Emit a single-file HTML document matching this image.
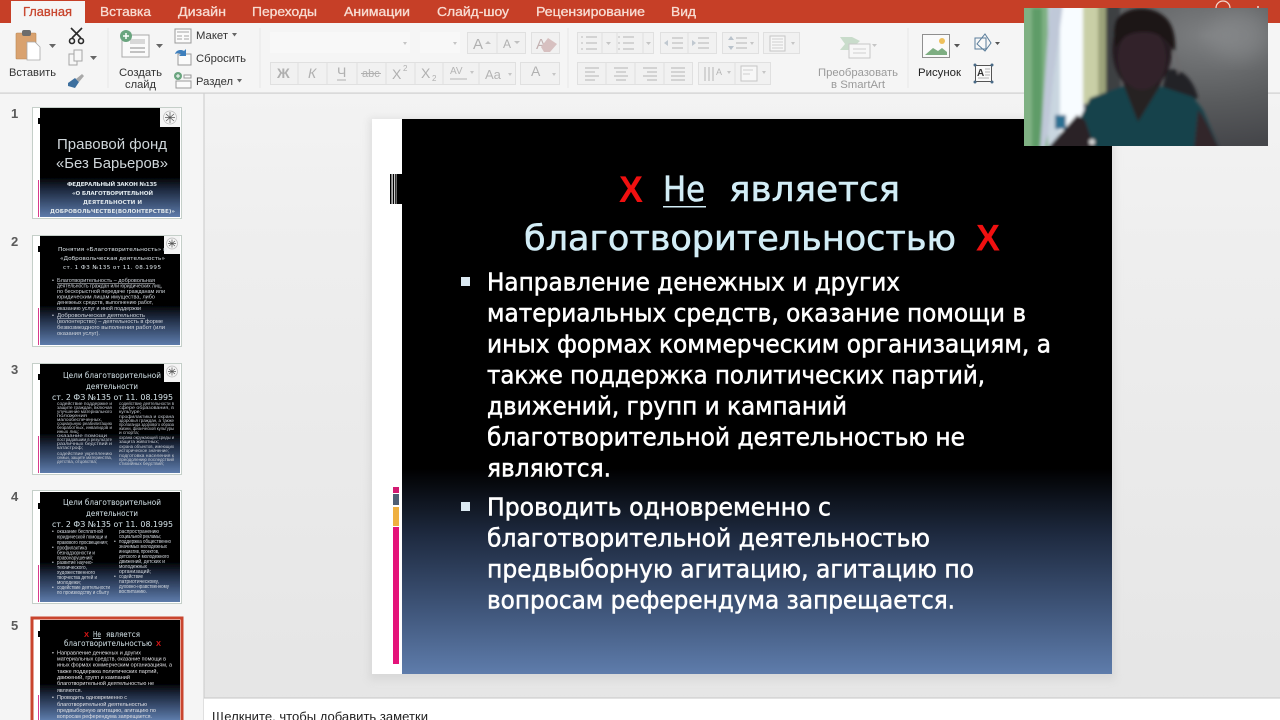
<!DOCTYPE html>
<html lang="ru">
<head>
<meta charset="utf-8">
<title>PowerPoint</title>
<style>
html,body{margin:0;padding:0;width:1280px;height:720px;overflow:hidden;background:#e6e6e6}
svg{display:block;position:absolute;left:0;top:0}
text{font-family:"Liberation Sans","DejaVu Sans",sans-serif}
.tab{font-size:13px;fill:#f8dcd2;stroke:#f8dcd2;stroke-width:.3px}
.rb{font-size:11px;fill:#333}
.dis{font-size:11px;fill:#9a9a9a}
.num{font-size:13px;font-weight:bold;fill:#5a5a5a}
.body{font-family:"DejaVu Sans",sans-serif;font-size:25px;fill:#fff;stroke:#fff;stroke-width:.55px}
.title{font-family:"DejaVu Sans",sans-serif;font-size:35px;fill:#d2edf6;stroke:#d2edf6;stroke-width:.6px}
.t1{font-size:15px;fill:#cfd6da}
.t2{font-size:5.600px;fill:#dde5ea}
.t2b{font-family:"DejaVu Sans",sans-serif;font-size:5.600px;fill:#dde5ea}
.t3{font-size:5.500px;fill:#d0d5dc}
.t4{font-family:"DejaVu Sans",sans-serif;font-size:8px;fill:#d5e4ea}
.t5{font-size:4.300px;fill:#c4c9d1}
.ico{fill:none;stroke:#8a8a8a;stroke-width:1}
.g{fill:none;stroke:#b5b5b5;stroke-width:1}
.btn{fill:#f1f1f1;stroke:#e0e0e0;stroke-width:1}
.gl{font-size:14px;fill:#b0b0b0}
.sep{stroke:#e8e8e8;stroke-width:1}
</style>
</head>
<body>
<svg width="1280" height="720" viewBox="0 0 1280 720" xmlns="http://www.w3.org/2000/svg">
<defs>
<linearGradient id="sl" x1="0" y1="0" x2="0" y2="1">
<stop offset="0" stop-color="#000"/><stop offset=".63" stop-color="#000"/>
<stop offset=".75" stop-color="#1e2a40"/><stop offset=".88" stop-color="#3e5478"/><stop offset="1" stop-color="#5e7cab"/>
</linearGradient>
<linearGradient id="cv" x1="0" y1="0" x2="0" y2="1">
<stop offset="0" stop-color="#f6f6f6"/><stop offset=".35" stop-color="#eeeeee"/><stop offset="1" stop-color="#e5e5e5"/>
</linearGradient>
<filter id="b0" filterUnits="userSpaceOnUse" x="0" y="93" width="204" height="627"><feGaussianBlur stdDeviation=".35"/></filter>
<filter id="b1" x="-20%" y="-20%" width="140%" height="140%"><feGaussianBlur stdDeviation="1.6"/></filter>
<filter id="b2" x="-20%" y="-20%" width="140%" height="140%"><feGaussianBlur stdDeviation="4"/></filter>
<filter id="b3" x="-20%" y="-20%" width="140%" height="140%"><feGaussianBlur stdDeviation="10"/></filter>
<clipPath id="cam"><rect x="1024" y="8" width="244" height="138"/></clipPath>
<radialGradient id="wall" cx=".75" cy=".2" r=".8">
<stop offset="0" stop-color="#7d7f81"/><stop offset=".6" stop-color="#595b5d"/><stop offset="1" stop-color="#45464a"/>
</radialGradient>
</defs>

<!-- base panels -->
<rect width="1280" height="720" fill="url(#cv)"/>
<rect x="0" y="93" width="204" height="627" fill="#f5f5f5"/>
<rect x="203.500" y="93" width="1" height="627" fill="#c9c9c9"/>

<!-- tab bar -->
<rect x="0" y="0" width="1280" height="23" fill="#c63f27"/>
<rect x="11" y="1" width="74" height="23" fill="#f5f5f5"/>
<text x="23" y="16" class="tab" style="fill:#c8452d;stroke:#c8452d" textLength="49" lengthAdjust="spacingAndGlyphs">Главная</text>
<text x="100" y="16" class="tab" textLength="51" lengthAdjust="spacingAndGlyphs">Вставка</text>
<text x="178" y="16" class="tab" textLength="48" lengthAdjust="spacingAndGlyphs">Дизайн</text>
<text x="252" y="16" class="tab" textLength="65" lengthAdjust="spacingAndGlyphs">Переходы</text>
<text x="344" y="16" class="tab" textLength="66" lengthAdjust="spacingAndGlyphs">Анимации</text>
<text x="437" y="16" class="tab" textLength="72" lengthAdjust="spacingAndGlyphs">Слайд-шоу</text>
<text x="536" y="16" class="tab" textLength="109" lengthAdjust="spacingAndGlyphs">Рецензирование</text>
<text x="671" y="16" class="tab" textLength="25" lengthAdjust="spacingAndGlyphs">Вид</text>
<circle cx="1223" cy="8" r="7" fill="none" stroke="#f4d9d0" stroke-width="1.200"/>
<path d="M1258 8v-2" stroke="#f4d9d0" stroke-width="1.500"/>

<!-- ribbon -->
<rect x="0" y="23" width="1280" height="70" fill="#f5f5f5"/>
<rect x="0" y="92.500" width="1280" height="1.200" fill="#cfcfcf"/>

<!-- paste -->
<rect x="16" y="33" width="20" height="26" rx="1" fill="#d9a26f" stroke="#b98654" stroke-width=".6"/>
<rect x="22" y="30" width="9" height="6" rx="2" fill="#6c6c6c"/>
<path d="M27 42h8l5 5v13H27z" fill="#fff" stroke="#a8a8a8" stroke-width=".8"/>
<path d="M49 44h7l-3.500 4z" fill="#666"/>
<!-- scissors -->
<g fill="none" stroke="#2a2a2a" stroke-width="1.600">
<path d="M71 28l10 10M82 28l-10 10"/>
<circle cx="72" cy="41" r="2.500"/><circle cx="81" cy="41" r="2.500"/>
</g>
<!-- copy -->
<rect x="69" y="54" width="8" height="11" fill="#f7f7f7" stroke="#a5a5a5"/>
<rect x="74" y="50" width="8" height="11" fill="#f7f7f7" stroke="#a5a5a5"/>
<path d="M90 56h7l-3.500 4z" fill="#666"/>
<!-- brush -->
<path d="M68 83l7-5 4 4-4 6-7-2z" fill="#3d6f9e"/>
<path d="M76 79l6-5 2 2-5 6z" fill="#a9a9a9"/>
<text x="9" y="76" class="rb" textLength="47" lengthAdjust="spacingAndGlyphs">Вставить</text>
<line x1="108" y1="28" x2="108" y2="88" class="sep"/>

<!-- new slide -->
<rect x="122" y="35" width="27" height="22" fill="#fafafa" stroke="#a9a9a9"/>
<rect x="130" y="39" width="15" height="5" fill="#d8d8d8"/>
<path d="M130 48h15M130 52h15" stroke="#8a8a8a" stroke-width="1"/>
<circle cx="126" cy="36" r="6" fill="#6aa57f"/>
<path d="M126 33v6M123 36h6" stroke="#fff" stroke-width="1.500"/>
<path d="M156 44h7l-3.500 4z" fill="#666"/>
<text x="119" y="76" class="rb" textLength="43" lengthAdjust="spacingAndGlyphs">Создать</text>
<text x="125" y="88" class="rb" textLength="31" lengthAdjust="spacingAndGlyphs">слайд</text>

<!-- layout buttons -->
<rect x="175" y="29" width="16" height="14" fill="#fbfbfb" stroke="#9a9a9a"/>
<path d="M177 32h12M177 36h5M184 36h5M177 39h5M184 39h5" stroke="#a5a5a5"/>
<text x="196" y="39" class="rb" textLength="32" lengthAdjust="spacingAndGlyphs">Макет</text>
<path d="M232 33h5l-2.500 3.500z" fill="#666"/>
<rect x="178" y="54" width="13" height="11" fill="#fbfbfb" stroke="#9a9a9a"/>
<path d="M175 54c1-4 6-5 9-3l2-2v7h-7l2-2c-2-1-4-1-6 0z" fill="#3d7fbd"/>
<text x="196" y="62" class="rb" textLength="50" lengthAdjust="spacingAndGlyphs">Сбросить</text>
<rect x="176" y="81" width="15" height="7" fill="#fbfbfb" stroke="#9a9a9a"/>
<path d="M184 75h7v3h-7z" fill="#fbfbfb" stroke="#9a9a9a"/>
<circle cx="178" cy="76" r="4" fill="#6aa57f"/>
<path d="M178 74v4M176 76h4" stroke="#fff"/>
<text x="196" y="85" class="rb" textLength="37" lengthAdjust="spacingAndGlyphs">Раздел</text>
<path d="M237 79h5l-2.500 3.500z" fill="#666"/>
<line x1="260" y1="28" x2="260" y2="88" class="sep"/>

<!-- font group -->
<rect x="270" y="32" width="140" height="21" fill="#f8f8f8"/>
<rect x="420" y="32" width="40" height="21" fill="#f8f8f8"/>
<path d="M403 42h4l-2 3zM453 42h4l-2 3z" fill="#c5c5c5"/>
<rect x="467.500" y="32.500" width="58" height="21" class="btn"/>
<line x1="497" y1="33" x2="497" y2="53" stroke="#e0e0e0"/>
<text x="473" y="49" style="font-size:15px;fill:#b0b0b0">A</text>
<path d="M485 44l3-3 3 3z" fill="#c0c0c0"/>
<text x="503" y="48" style="font-size:12px;fill:#b0b0b0">A</text>
<path d="M514 41h6l-3 3z" fill="#c0c0c0"/>
<rect x="531.500" y="32.500" width="28" height="21" class="btn"/>
<text x="536" y="49" style="font-size:15px;fill:#c2b0b0">A</text>
<path d="M541 47l7-9 9 6-7 8h-6z" fill="#d7c0c0"/>

<rect x="270.500" y="62.500" width="245" height="22" class="btn"/>
<path d="M298 63v21M327 63v21M357 63v21M386 63v21M415 63v21M443 63v21M479 63v21" stroke="#e0e0e0"/>
<text x="277" y="78" class="gl" style="font-weight:bold">Ж</text>
<text x="308" y="78" class="gl" style="font-style:italic">К</text>
<text x="337" y="77" class="gl">Ч</text><path d="M337 80h9" stroke="#b0b0b0"/>
<text x="362" y="77" style="font-size:11px;fill:#b0b0b0">abc</text><path d="M361 73.500h20" stroke="#b0b0b0"/>
<text x="392" y="79" class="gl">X</text><text x="403" y="71" style="font-size:8px;fill:#b0b0b0">2</text>
<text x="421" y="78" class="gl">X</text><text x="432" y="81" style="font-size:8px;fill:#b0b0b0">2</text>
<text x="450" y="74" style="font-size:10px;fill:#b5b5b5">AV</text><path d="M450 79h17" stroke="#b5b5b5"/><path d="M470 71h4l-2 3z" fill="#c5c5c5"/>
<text x="485" y="79" style="font-size:13px;fill:#b5b5b5">Aa</text><path d="M508 73h4l-2 3z" fill="#c5c5c5"/>
<rect x="520.500" y="62.500" width="39" height="22" class="btn"/>
<text x="531" y="76" class="gl">A</text><path d="M552 73h4l-2 3z" fill="#c5c5c5"/>
<line x1="568" y1="28" x2="568" y2="88" class="sep"/>

<!-- paragraph group -->
<rect x="577.500" y="32.500" width="76" height="21" class="btn"/>
<path d="M602 33v20M617 33v20M643 33v20" stroke="#e0e0e0"/>
<path d="M586 37h11M586 43h11M586 49h11M623 37h11M623 43h11M623 49h11" class="g"/>
<path d="M581 37h2M581 43h2M581 49h2M618 37h2M618 43h2M618 49h2" stroke="#bcbcbc"/>
<path d="M606 42h5l-2.500 3zM646 42h5l-2.500 3z" fill="#c5c5c5"/>
<rect x="660.500" y="32.500" width="56" height="21" class="btn"/>
<line x1="688" y1="33" x2="688" y2="53" stroke="#e0e0e0"/>
<path d="M672 38h11M672 43h11M672 48h11M698 38h11M698 43h11M698 48h11" class="g"/>
<path d="M664 43l4-3v6zM696 43l-4-3v6z" fill="#c0c8d0"/>
<rect x="722.500" y="32.500" width="36" height="21" class="btn"/>
<path d="M736 38h11M736 43h11M736 48h11" class="g"/>
<path d="M731 36l-3 4h6zM731 50l-3-4h6z" fill="#b9c2cb"/>
<path d="M750 42h4l-2 3z" fill="#c5c5c5"/>
<rect x="763.500" y="32.500" width="36" height="21" class="btn"/>
<rect x="770" y="36" width="15" height="15" fill="#f7f7f7" stroke="#c5c5c5"/>
<path d="M772 39h11M772 42h11M772 45h11M772 48h11" stroke="#cfcfcf"/>
<path d="M791 42h4l-2 3z" fill="#c5c5c5"/>

<rect x="577.500" y="62.500" width="115" height="22" class="btn"/>
<path d="M606 63v21M635 63v21M664 63v21" stroke="#e0e0e0"/>
<path d="M585 68h14M585 72h10M585 76h14M585 80h10" class="g"/>
<path d="M614 68h14M616 72h10M614 76h14M616 80h10" class="g"/>
<path d="M643 68h14M647 72h10M643 76h14M647 80h10" class="g"/>
<path d="M671 68h14M671 72h14M671 76h14M671 80h14" class="g"/>
<rect x="698.500" y="62.500" width="72" height="22" class="btn"/>
<line x1="735" y1="63" x2="735" y2="84" stroke="#e0e0e0"/>
<path d="M705 67v14M709 67v14M713 67v14" class="g"/>
<text x="716" y="75" style="font-size:9px;fill:#b5b5b5">A</text>
<path d="M727 71h4l-2 3z" fill="#c5c5c5"/>
<rect x="741" y="66" width="16" height="15" fill="#f7f7f7" stroke="#c5c5c5"/>
<path d="M743 70h10M743 74h7" stroke="#cfcfcf"/>
<path d="M762 71h4l-2 3z" fill="#c5c5c5"/>

<!-- smartart -->
<path d="M840 37h12l8 4-10 9h-10l5-6z" fill="#c9dccb"/>
<rect x="849" y="44" width="21" height="14" fill="#f7f7f7" stroke="#c7c7c7"/>
<path d="M853 49h13M853 53h13" stroke="#cfcfcf"/>
<path d="M872 44h5l-2.500 3z" fill="#c5c5c5"/>
<text x="818" y="76" class="dis" textLength="80" lengthAdjust="spacingAndGlyphs">Преобразовать</text>
<text x="831" y="88" class="dis" textLength="54" lengthAdjust="spacingAndGlyphs">в SmartArt</text>
<line x1="908" y1="28" x2="908" y2="88" class="sep"/>

<!-- picture -->
<rect x="922.500" y="34.500" width="27" height="23" fill="#fafafa" stroke="#8f8f8f"/>
<path d="M925 55l8-7 5 3 4-3 5 4v3z" fill="#7eae82"/>
<circle cx="942" cy="41" r="3" fill="#eec05c"/>
<path d="M954 44h6l-3 3.500z" fill="#555"/>
<text x="918" y="76" style="font-size:11px;fill:#222" textLength="43" lengthAdjust="spacingAndGlyphs">Рисунок</text>
<rect x="975" y="38" width="11" height="11" fill="#f8f8f8" stroke="#5a7d9a"/>
<path d="M985 34l6 9-6 8-8-7z" fill="none" stroke="#5a7d9a"/>
<path d="M995 42h5l-2.500 3z" fill="#555"/>
<rect x="975.500" y="65.500" width="16" height="16" fill="#fafafa" stroke="#555"/>
<circle cx="975" cy="65" r="1.500" fill="#4a6a86"/><circle cx="992" cy="65" r="1.500" fill="#4a6a86"/><circle cx="975" cy="82" r="1.500" fill="#4a6a86"/><circle cx="992" cy="82" r="1.500" fill="#4a6a86"/>
<text x="977" y="76" style="font-size:10px;font-weight:bold;fill:#333">A</text>
<path d="M985 69h5M985 72h5M985 75h5M978 78h11" stroke="#999" stroke-width=".7"/>

<!-- notes -->
<rect x="204" y="698" width="1076" height="22" fill="#fff"/>
<rect x="204" y="697.500" width="1076" height="1" fill="#c6c6c6"/>
<text x="212" y="721" style="font-size:13px;fill:#222" textLength="216" lengthAdjust="spacingAndGlyphs">Щелкните, чтобы добавить заметки</text>

<!-- main slide -->
<rect x="369" y="118" width="746" height="562" fill="#c4c4c4" opacity=".4" filter="url(#b2)"/>
<rect x="372" y="119" width="740" height="555" fill="#fff"/>
<rect x="402" y="119" width="710" height="555" fill="url(#sl)"/>
<rect x="390" y="174" width="1.500" height="30" fill="#000"/>
<rect x="392.700" y="174" width="1.500" height="30" fill="#000"/>
<rect x="395.200" y="174" width="1.200" height="30" fill="#000"/>
<rect x="396.800" y="174" width="5.500" height="30" fill="#000"/>
<rect x="393" y="487" width="6" height="6" fill="#d21a72"/>
<rect x="393" y="494" width="6" height="11" fill="#4f5f75"/>
<rect x="393" y="507" width="6" height="19" fill="#efb041"/>
<rect x="393" y="527" width="6" height="137" fill="#e4137a"/>

<text x="619" y="202" style="font-size:37px;font-weight:bold;fill:#f01010" textLength="24" lengthAdjust="spacingAndGlyphs">X</text>
<text x="663" y="201" class="title" textLength="42" lengthAdjust="spacingAndGlyphs">Не</text>
<rect x="663" y="206" width="43" height="1.500" fill="#d2edf6"/>
<text x="729" y="201" class="title" textLength="171" lengthAdjust="spacingAndGlyphs">является</text>
<text x="524" y="250" class="title" textLength="432" lengthAdjust="spacingAndGlyphs">благотворительностью</text>
<text x="976" y="250.500" style="font-size:37px;font-weight:bold;fill:#f01010" textLength="24" lengthAdjust="spacingAndGlyphs">X</text>

<rect x="461" y="277" width="9" height="9" fill="#dbe9f2"/>
<text x="487" y="290.500" class="body" textLength="413" lengthAdjust="spacingAndGlyphs">Направление денежных и других</text>
<text x="487" y="321.500" class="body" textLength="539" lengthAdjust="spacingAndGlyphs">материальных средств, оказание помощи в</text>
<text x="487" y="352.500" class="body" textLength="564" lengthAdjust="spacingAndGlyphs">иных формах коммерческим организациям, а</text>
<text x="487" y="383.500" class="body" textLength="498" lengthAdjust="spacingAndGlyphs">также поддержка политических партий,</text>
<text x="487" y="414.500" class="body" textLength="360" lengthAdjust="spacingAndGlyphs">движений, групп и кампаний</text>
<text x="487" y="445.500" class="body" textLength="478" lengthAdjust="spacingAndGlyphs">благотворительной деятельностью не</text>
<text x="487" y="476.500" class="body" textLength="124" lengthAdjust="spacingAndGlyphs">являются.</text>
<rect x="461" y="502" width="9" height="9" fill="#dbe9f2"/>
<text x="487" y="515.500" class="body" textLength="344" lengthAdjust="spacingAndGlyphs">Проводить одновременно с</text>
<text x="487" y="546.500" class="body" textLength="443" lengthAdjust="spacingAndGlyphs">благотворительной деятельностью</text>
<text x="487" y="577.500" class="body" textLength="487" lengthAdjust="spacingAndGlyphs">предвыборную агитацию, агитацию по</text>
<text x="487" y="608.500" class="body" textLength="468" lengthAdjust="spacingAndGlyphs">вопросам референдума запрещается.</text>

<!-- thumbnails -->
<g filter="url(#b0)">
<text x="11" y="118" class="num">1</text>
<rect x="32.500" y="107.500" width="149" height="111" fill="#fff" stroke="#c5cfc9"/>
<rect x="40" y="108" width="140" height="109" fill="url(#sl)"/>
<rect x="160" y="108" width="20" height="19" fill="#f4f4f4"/>
<circle cx="170" cy="117.500" r="6.500" fill="none" stroke="#bbb" stroke-width=".7"/>
<path d="M166 114l8 7M174 114l-8 7M170 112v11M165 117.500h10" stroke="#555" stroke-width=".7"/>
<rect x="38" y="118" width="2" height="6" fill="#000"/>
<rect x="38" y="180" width="1" height="37" fill="#d93a8c"/>
<text x="57" y="149" class="t1" textLength="110" lengthAdjust="spacingAndGlyphs">Правовой фонд</text>
<text x="56" y="168" class="t1" textLength="112" lengthAdjust="spacingAndGlyphs">«Без Барьеров»</text>
<text x="67" y="186" class="t2b" style="font-weight:bold" textLength="90" lengthAdjust="spacing">ФЕДЕРАЛЬНЫЙ ЗАКОН №135</text>
<text x="72" y="195" class="t2b" style="font-weight:bold" textLength="81" lengthAdjust="spacing">«О БЛАГОТВОРИТЕЛЬНОЙ</text>
<text x="83" y="204" class="t2b" style="font-weight:bold" textLength="59" lengthAdjust="spacing">ДЕЯТЕЛЬНОСТИ И</text>
<text x="50" y="213" class="t2b" style="font-weight:bold" textLength="125" lengthAdjust="spacingAndGlyphs">ДОБРОВОЛЬЧЕСТВЕ(ВОЛОНТЕРСТВЕ)»</text>

<text x="11" y="246" class="num">2</text>
<rect x="32.500" y="235.500" width="149" height="111" fill="#fff" stroke="#c5cfc9"/>
<rect x="40" y="236" width="140" height="109" fill="url(#sl)"/>
<rect x="164" y="236" width="16" height="18" fill="#f4f4f4"/>
<circle cx="172" cy="243.500" r="5.500" fill="none" stroke="#bbb" stroke-width=".7"/>
<path d="M169 241l6 5M175 241l-6 5M172 239.500v8M168 243.500h8" stroke="#555" stroke-width=".7"/>
<rect x="38" y="246" width="2" height="6" fill="#000"/>
<rect x="38" y="308" width="1" height="37" fill="#d93a8c"/>
<text x="58" y="251" class="t2b" textLength="109" lengthAdjust="spacingAndGlyphs">Понятия «Благотворительность» и</text>
<text x="60" y="260" class="t2b" textLength="105" lengthAdjust="spacingAndGlyphs">«Добровольческая деятельность»</text>
<text x="63" y="269" class="t2b" textLength="98" lengthAdjust="spacing">ст. 1 ФЗ №135 от 11. 08.1995</text>
<g class="t3">
<text x="52" y="282">•</text>
<text x="57" y="282" textLength="98" lengthAdjust="spacingAndGlyphs" style="text-decoration:underline">Благотворительность – добровольная</text>
<text x="57" y="287.500" textLength="105" lengthAdjust="spacingAndGlyphs">деятельность граждан или юридических лиц,</text>
<text x="57" y="293" textLength="108" lengthAdjust="spacingAndGlyphs">по бескорыстной передаче гражданам или</text>
<text x="57" y="298.500" textLength="98" lengthAdjust="spacingAndGlyphs">юридическим лицам имущества, либо</text>
<text x="57" y="304" textLength="96" lengthAdjust="spacingAndGlyphs">денежных средств, выполнению работ,</text>
<text x="57" y="310" textLength="84" lengthAdjust="spacingAndGlyphs">оказанию услуг и иной поддержки</text>
<text x="52" y="317">•</text>
<text x="57" y="317" textLength="88" lengthAdjust="spacingAndGlyphs" style="text-decoration:underline">Добровольческая деятельность</text>
<text x="57" y="323" textLength="106" lengthAdjust="spacingAndGlyphs">(волонтерство) – деятельность в форме</text>
<text x="57" y="329" textLength="108" lengthAdjust="spacingAndGlyphs">безвозмездного выполнения работ (или</text>
<text x="57" y="335" textLength="43" lengthAdjust="spacingAndGlyphs">оказания услуг).</text>
</g>

<text x="11" y="374" class="num">3</text>
<rect x="32.500" y="363.500" width="149" height="111" fill="#fff" stroke="#c5cfc9"/>
<rect x="40" y="364" width="140" height="109" fill="url(#sl)"/>
<rect x="164" y="364" width="16" height="18" fill="#f4f4f4"/>
<circle cx="172" cy="371.500" r="5.500" fill="none" stroke="#bbb" stroke-width=".7"/>
<path d="M169 369l6 5M175 369l-6 5M172 367.500v8M168 371.500h8" stroke="#555" stroke-width=".7"/>
<rect x="38" y="374" width="2" height="6" fill="#000"/>
<rect x="38" y="436" width="1" height="37" fill="#d93a8c"/>
<text x="63" y="378" class="t4" textLength="98" lengthAdjust="spacingAndGlyphs">Цели благотворительной</text>
<text x="86" y="389" class="t4" textLength="52" lengthAdjust="spacingAndGlyphs">деятельности</text>
<text x="52" y="400" class="t4" textLength="121" lengthAdjust="spacingAndGlyphs">ст. 2 ФЗ №135 от 11. 08.1995</text>
<g class="t5">
<text x="57" y="405" textLength="55" lengthAdjust="spacingAndGlyphs">содействие поддержке и</text><text x="57" y="409" textLength="55" lengthAdjust="spacingAndGlyphs">защите граждан, включая</text><text x="57" y="413" textLength="55" lengthAdjust="spacingAndGlyphs">улучшение материального</text><text x="57" y="417" textLength="30" lengthAdjust="spacingAndGlyphs">положения</text><text x="57" y="421" textLength="45" lengthAdjust="spacingAndGlyphs">малообеспеченных,</text><text x="57" y="425" textLength="55" lengthAdjust="spacingAndGlyphs">социальную реабилитацию</text><text x="57" y="429" textLength="55" lengthAdjust="spacingAndGlyphs">безработных, инвалидов и</text><text x="57" y="433" textLength="22" lengthAdjust="spacingAndGlyphs">иных лиц;</text>
<text x="57" y="437" textLength="50" lengthAdjust="spacingAndGlyphs">оказание помощи</text><text x="57" y="441" textLength="55" lengthAdjust="spacingAndGlyphs">пострадавшим в результате</text><text x="57" y="445" textLength="55" lengthAdjust="spacingAndGlyphs">различных бедствий и</text><text x="57" y="449" textLength="26" lengthAdjust="spacingAndGlyphs">катастроф;</text>
<text x="57" y="455" textLength="55" lengthAdjust="spacingAndGlyphs">содействие укреплению</text><text x="57" y="459" textLength="55" lengthAdjust="spacingAndGlyphs">семьи, защите материнства,</text><text x="57" y="463" textLength="40" lengthAdjust="spacingAndGlyphs">детства, отцовства;</text>
<text x="119" y="405" textLength="55" lengthAdjust="spacingAndGlyphs">содействие деятельности в</text><text x="119" y="409" textLength="55" lengthAdjust="spacingAndGlyphs">сфере образования, в</text><text x="119" y="413" textLength="22" lengthAdjust="spacingAndGlyphs">культуре;</text>
<text x="119" y="418" textLength="55" lengthAdjust="spacingAndGlyphs">профилактика и охрана</text><text x="119" y="422" textLength="55" lengthAdjust="spacingAndGlyphs">здоровья граждан, а также</text><text x="119" y="426" textLength="55" lengthAdjust="spacingAndGlyphs">пропаганда здорового образа</text><text x="119" y="430" textLength="55" lengthAdjust="spacingAndGlyphs">жизни, физической культуры</text><text x="119" y="434" textLength="20" lengthAdjust="spacingAndGlyphs">и спорта;</text>
<text x="119" y="439" textLength="55" lengthAdjust="spacingAndGlyphs">охрана окружающей среды и</text><text x="119" y="443" textLength="40" lengthAdjust="spacingAndGlyphs">защита животных;</text>
<text x="119" y="448" textLength="55" lengthAdjust="spacingAndGlyphs">охрана объектов, имеющих</text><text x="119" y="452" textLength="50" lengthAdjust="spacingAndGlyphs">историческое значение;</text>
<text x="119" y="457" textLength="55" lengthAdjust="spacingAndGlyphs">подготовка населения к</text><text x="119" y="461" textLength="55" lengthAdjust="spacingAndGlyphs">преодолению последствий</text><text x="119" y="465" textLength="45" lengthAdjust="spacingAndGlyphs">стихийных бедствий;</text>
</g>

<text x="11" y="501" class="num">4</text>
<rect x="32.500" y="490.500" width="149" height="113" fill="#fff" stroke="#c5cfc9"/>
<rect x="40" y="492" width="140" height="110" fill="url(#sl)"/>
<rect x="38" y="503" width="2" height="6" fill="#000"/>
<rect x="38" y="565" width="1" height="37" fill="#d93a8c"/>
<text x="63" y="505" class="t4" textLength="98" lengthAdjust="spacingAndGlyphs">Цели благотворительной</text>
<text x="86" y="516" class="t4" textLength="52" lengthAdjust="spacingAndGlyphs">деятельности</text>
<text x="52" y="527" class="t4" textLength="121" lengthAdjust="spacingAndGlyphs">ст. 2 ФЗ №135 от 11. 08.1995</text>
<g style="font-size:5px;fill:#d3d8df">
<text x="52" y="533">•</text><text x="57" y="533" textLength="46" lengthAdjust="spacingAndGlyphs">оказание бесплатной</text><text x="57" y="538.500" textLength="50" lengthAdjust="spacingAndGlyphs">юридической помощи и</text><text x="57" y="544" textLength="51" lengthAdjust="spacingAndGlyphs">правового просвещения;</text>
<text x="52" y="549">•</text><text x="57" y="549.500" textLength="30" lengthAdjust="spacingAndGlyphs">профилактика</text><text x="57" y="554.500" textLength="38" lengthAdjust="spacingAndGlyphs">безнадзорности и</text><text x="57" y="559.500" textLength="36" lengthAdjust="spacingAndGlyphs">правонарушений;</text>
<text x="52" y="564">•</text><text x="57" y="564" textLength="36" lengthAdjust="spacingAndGlyphs">развитие научно-</text><text x="57" y="569" textLength="30" lengthAdjust="spacingAndGlyphs">технического,</text><text x="57" y="574" textLength="38" lengthAdjust="spacingAndGlyphs">художественного</text><text x="57" y="579" textLength="40" lengthAdjust="spacingAndGlyphs">творчества детей и</text><text x="57" y="584" textLength="24" lengthAdjust="spacingAndGlyphs">молодежи;</text>
<text x="52" y="589">•</text><text x="57" y="589" textLength="53" lengthAdjust="spacingAndGlyphs">содействие деятельности</text><text x="57" y="594" textLength="52" lengthAdjust="spacingAndGlyphs">по производству и сбыту</text>
<text x="119" y="533" textLength="40" lengthAdjust="spacingAndGlyphs">распространению</text><text x="119" y="538" textLength="42" lengthAdjust="spacingAndGlyphs">социальной рекламы;</text>
<text x="114" y="543">•</text><text x="119" y="543" textLength="52" lengthAdjust="spacingAndGlyphs">поддержка общественно</text><text x="119" y="548" textLength="48" lengthAdjust="spacingAndGlyphs">значимых молодежных</text><text x="119" y="553" textLength="40" lengthAdjust="spacingAndGlyphs">инициатив, проектов,</text><text x="119" y="558" textLength="50" lengthAdjust="spacingAndGlyphs">детского и молодежного</text><text x="119" y="563" textLength="46" lengthAdjust="spacingAndGlyphs">движений, детских и</text><text x="119" y="568" textLength="28" lengthAdjust="spacingAndGlyphs">молодежных</text><text x="119" y="573" textLength="32" lengthAdjust="spacingAndGlyphs">организаций;</text>
<text x="114" y="578">•</text><text x="119" y="578" textLength="24" lengthAdjust="spacingAndGlyphs">содействие</text><text x="119" y="583" textLength="40" lengthAdjust="spacingAndGlyphs">патриотическому,</text><text x="119" y="588" textLength="50" lengthAdjust="spacingAndGlyphs">духовно-нравственному</text><text x="119" y="593" textLength="28" lengthAdjust="spacingAndGlyphs">воспитанию.</text>
</g>

<text x="11" y="630" class="num">5</text>
<rect x="32" y="618" width="150" height="104" fill="#fff" stroke="#c9452e" stroke-width="3"/>
<rect x="40" y="620" width="140" height="100" fill="url(#sl)"/>
<rect x="38" y="631" width="2" height="6" fill="#000"/>
<rect x="38" y="695" width="1" height="25" fill="#d93a8c"/>
<text x="84" y="637" style="font-size:7.500px;fill:#e01818;font-weight:bold">X</text>
<text x="93" y="637" class="t4" style="text-decoration:underline" textLength="8" lengthAdjust="spacingAndGlyphs">Не</text>
<text x="106" y="637" class="t4" textLength="34" lengthAdjust="spacingAndGlyphs">является</text>
<text x="64" y="646" class="t4" textLength="88" lengthAdjust="spacingAndGlyphs">благотворительностью</text>
<text x="156" y="646" style="font-size:7.500px;fill:#e01818;font-weight:bold">X</text>
<g style="font-size:5.300px;fill:#e0e0e4">
<text x="52" y="654.500">•</text>
<text x="57" y="654.500" textLength="84" lengthAdjust="spacingAndGlyphs">Направление денежных и других</text>
<text x="57" y="660.500" textLength="109" lengthAdjust="spacingAndGlyphs">материальных средств, оказание помощи в</text>
<text x="57" y="666.500" textLength="115" lengthAdjust="spacingAndGlyphs">иных формах коммерческим организациям, а</text>
<text x="57" y="673" textLength="101" lengthAdjust="spacingAndGlyphs">также поддержка политических партий,</text>
<text x="57" y="679" textLength="73" lengthAdjust="spacingAndGlyphs">движений, групп и кампаний</text>
<text x="57" y="685" textLength="97" lengthAdjust="spacingAndGlyphs">благотворительной деятельностью не</text>
<text x="57" y="692" textLength="25" lengthAdjust="spacingAndGlyphs">являются.</text>
<text x="52" y="699">•</text>
<text x="57" y="699" textLength="70" lengthAdjust="spacingAndGlyphs">Проводить одновременно с</text>
<text x="57" y="706" textLength="90" lengthAdjust="spacingAndGlyphs">благотворительной деятельностью</text>
<text x="57" y="712" textLength="99" lengthAdjust="spacingAndGlyphs">предвыборную агитацию, агитацию по</text>
<text x="57" y="718" textLength="95" lengthAdjust="spacingAndGlyphs">вопросам референдума запрещается.</text>
</g>
</g>

<!-- webcam -->
<g clip-path="url(#cam)">
<rect x="1024" y="8" width="244" height="138" fill="url(#wall)"/>
<g filter="url(#b1)">
<rect x="1020" y="4" width="30" height="146" fill="#7fb183"/>
<rect x="1032" y="8" width="10" height="140" fill="#5e9c68"/>
<rect x="1048" y="4" width="14" height="146" fill="#c9d6e0"/>
<rect x="1060" y="4" width="24" height="146" fill="#f8fcff"/>
<path d="M1050 4h13l-9 70-6 60-4 16h-4z" fill="#bfc8d8"/>
<rect x="1083" y="4" width="24" height="100" fill="#c9cfa6"/>
<rect x="1098" y="4" width="8" height="90" fill="#9ca37a"/>
<rect x="1055" y="115" width="11" height="14" fill="#2c6f92"/>
<rect x="1106" y="4" width="14" height="90" fill="#3d3f42"/>
<path d="M1167 70c14-4 27 10 31 28l-22 8-16-8z" fill="#222327"/>
<path d="M1090 150l-10-32 10-20 30-11h43l30 10 10 13 17 40z" fill="#17424b"/>
<path d="M1046 150l31-35 8 5 10 30z" fill="#2a2225"/>
<path d="M1198 110c8 8 14 26 22 40h-26z" fill="#33282a"/>
<path d="M1124 86l14 36 22-36 2-6-38 0z" fill="#282124"/>
<ellipse cx="1142" cy="50" rx="30" ry="41" fill="#261d20"/>
<ellipse cx="1142" cy="58" rx="24" ry="32" fill="#33242a"/>
<path d="M1116 20c10-14 36-16 50-2 8 8 10 22 9 34-8-14-18-20-30-20-12 0-22 2-29 16-3-10-3-20 0-28z" fill="#1b1518"/>
<path d="M1172 52c6 4 8 14 6 22" stroke="#6d6a6c" stroke-width="2" fill="none"/>
<circle cx="1092" cy="142" r="3" fill="#d8d8d8"/>
</g>
<ellipse cx="1240" cy="35" rx="30" ry="25" fill="#a3a5a7" opacity=".3" filter="url(#b3)"/>
</g>
</svg>
</body>
</html>
